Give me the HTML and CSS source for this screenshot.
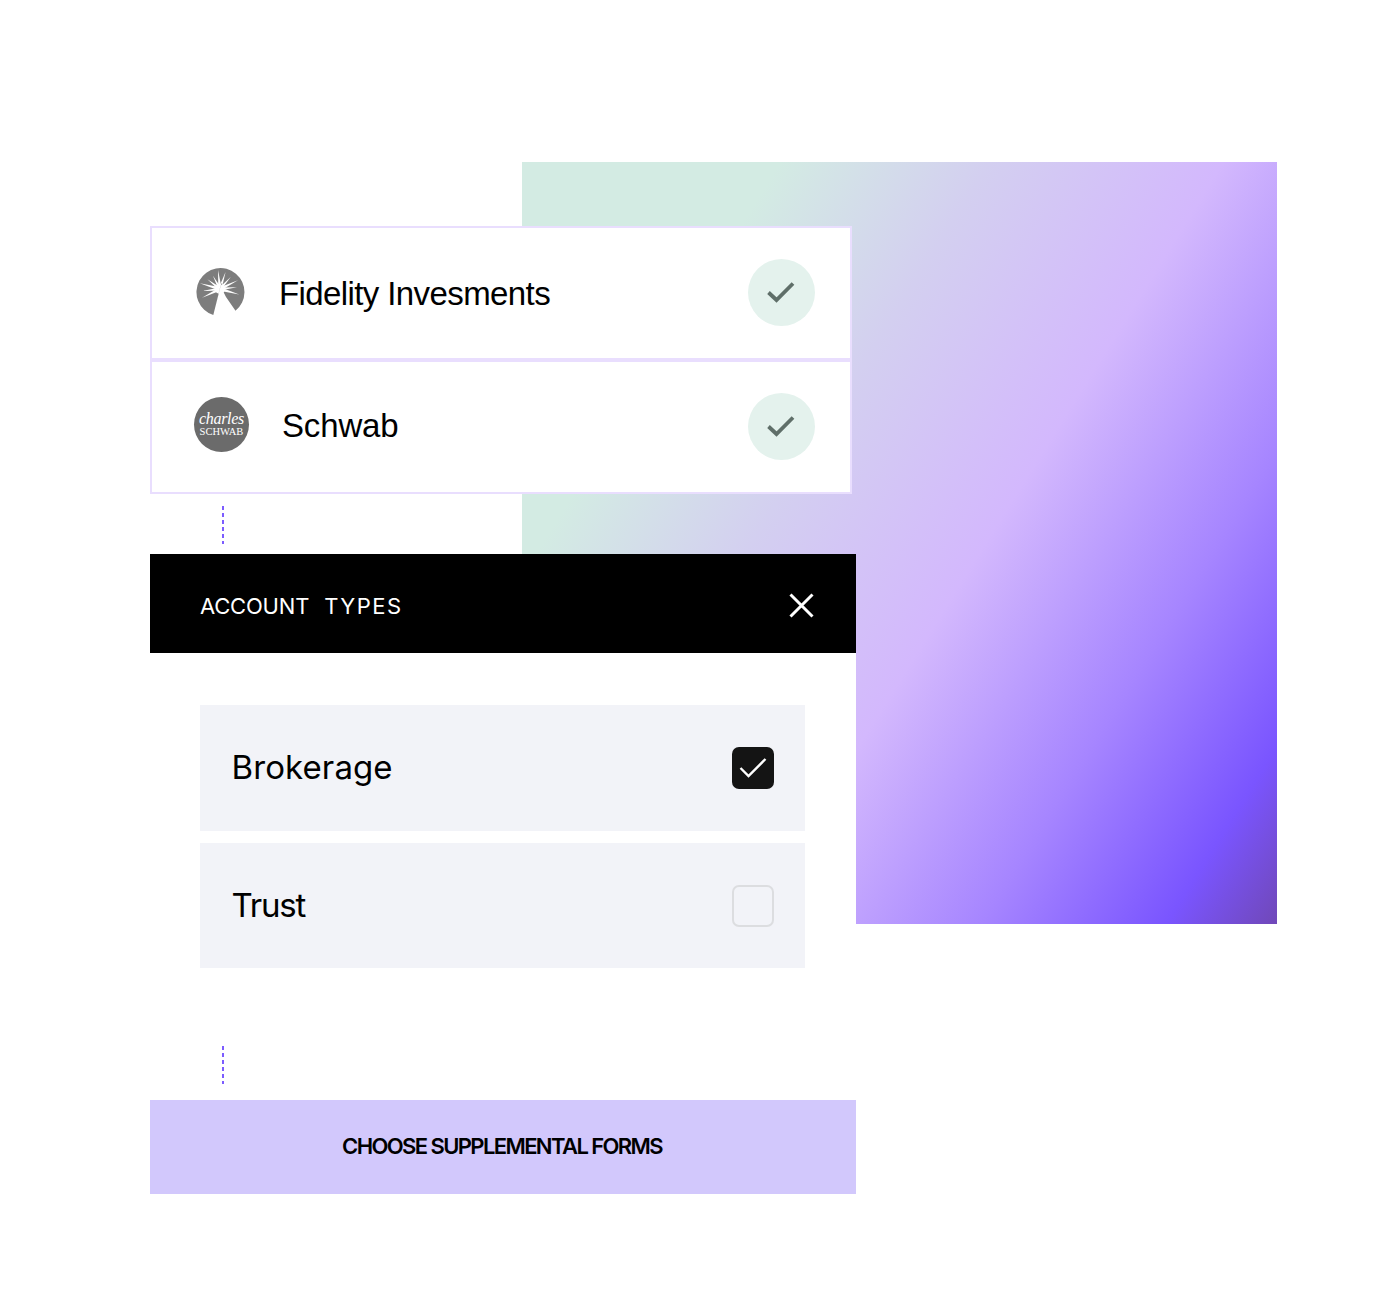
FILE: index.html
```html
<!DOCTYPE html>
<html lang="en">
<head>
<meta charset="utf-8">
<title>Account setup</title>
<link rel="stylesheet" href="styles.css">
</head>
<body>
<main class="stage">
  <div class="gradient"></div>
  <div class="column">
    <section class="card">
      <svg class="logo-fidelity" viewBox="0 0 50 48" width="50" height="48" aria-hidden="true">
        <path d="M17.300 47A24 24 0 1 1 39.500 42.800L30 29 24.500 18Z" fill="#7d7d7d"/>
        <g fill="#fff" transform="translate(24 21)">
          <path d="M-1.700 0 0-19 1.700 0Z" transform="rotate(-6)"/>
          <path d="M-1.600 0 0-15 1.600 0Z" transform="rotate(-28)"/>
          <path d="M-1.600 0 0-18 1.600 0Z" transform="rotate(18)"/>
          <path d="M-1.600 0 0-16 1.600 0Z" transform="rotate(42)"/>
          <path d="M-1.700 0 0-20 1.700 0Z" transform="rotate(64)"/>
          <path d="M-1.600 0 0-17 1.600 0Z" transform="rotate(84)"/>
          <path d="M-1.700 0 0-20 1.700 0Z" transform="rotate(106)"/>
          <path d="M-1.600 0 0-16 1.600 0Z" transform="rotate(-52)"/>
          <path d="M-1.700 0 0-21 1.700 0Z" transform="rotate(-74)"/>
          <path d="M-1.600 0 0-18 1.600 0Z" transform="rotate(-96)"/>
          <path d="M-1.700 0 0-20 1.700 0Z" transform="rotate(-116)"/>
          <circle r="5"/>
        </g>
        <path d="M25.300 15.500 18 44 24.500 18 26.500 15.500Z" fill="#7d7d7d"/>
      </svg>
      <span class="card-name fidelity">Fidelity Invesments</span>
      <span class="status">
        <svg viewBox="0 0 28 22" width="28" height="22" aria-hidden="true"><path d="M1.500 11.500 9.500 19 26 2.500" fill="none" stroke="#5f6f69" stroke-width="3.800"/></svg>
      </span>
    </section>
    <section class="card card-second">
      <span class="logo-schwab"><span class="charles">charles</span><span class="schwab">SCHWAB</span></span>
      <span class="card-name schwab-name">Schwab</span>
      <span class="status">
        <svg viewBox="0 0 28 22" width="28" height="22" aria-hidden="true"><path d="M1.500 11.500 9.500 19 26 2.500" fill="none" stroke="#5f6f69" stroke-width="3.800"/></svg>
      </span>
    </section>
    <div class="connector connector-top"></div>
    <section class="panel">
      <header class="panel-head">
        <h2 class="panel-title"><span class="word-first">ACCOUNT</span> <span class="word-second">TYPES</span></h2>
        <svg viewBox="0 0 25 25" width="25" height="25" aria-hidden="true"><path d="M1.500 1.500 23.500 23.500M23.500 1.500 1.500 23.500" fill="none" stroke="#fff" stroke-width="3"/></svg>
      </header>
      <div class="options">
        <div class="option">
          <span class="option-name brokerage">Brokerage</span>
          <span class="box box-on">
            <svg viewBox="0 0 28 22" width="28" height="22" aria-hidden="true"><path d="M1.500 11 9.500 19 26.500 2" fill="none" stroke="#fff" stroke-width="2.400"/></svg>
          </span>
        </div>
        <div class="option option-short">
          <span class="option-name trust">Trust</span>
          <span class="box box-off"></span>
        </div>
      </div>
    </section>
    <div class="connector connector-bottom"></div>
    <button class="cta" type="button">CHOOSE SUPPLEMENTAL FORMS</button>
  </div>
</main>
</body>
</html>
```
FILE: styles.css
```css
* { box-sizing: border-box; }
html, body { margin: 0; background: #fff; }
.stage {
  position: relative;
  width: 1374px;
  height: 1296px;
  padding: 226px 0 0 150px;
  overflow: hidden;
  font-family: Inter, "Liberation Sans", sans-serif;
  color: #000;
}
.gradient {
  position: absolute;
  left: 522px;
  top: 162px;
  width: 755px;
  height: 762px;
  background: linear-gradient(122deg, #d3ebe3 0%, #d3ebe3 21%, #d3cff0 38%, #d3b8fd 57%, #a685ff 76%, #7a55ff 91%, #7048b8 100%);
}
.column {
  position: relative;
  width: 706px;
  display: flex;
  flex-direction: column;
}
.card {
  width: 702px;
  height: 134px;
  display: flex;
  align-items: center;
  background: #fff;
  border: 2px solid #e9defe;
  padding-right: 35.500px;
}
.card-name {
  font-family: "Liberation Sans", Arial, sans-serif;
  font-size: 33px;
  letter-spacing: -0.6px;
  line-height: 40px;
  flex: 1;
}
.logo-fidelity { margin-left: 44px; margin-top: -2px; }
.fidelity { margin-left: 33px; margin-top: 1px; }
.logo-schwab {
  width: 55px;
  height: 55px;
  margin-left: 42px;
  margin-top: -5px;
  border-radius: 50%;
  background: #6b6b6b;
  color: #fff;
  display: flex;
  flex-direction: column;
  align-items: center;
  justify-content: center;
  font-family: "Liberation Serif", serif;
}
.charles { font-style: italic; font-size: 16px; line-height: 13px; letter-spacing: -0.3px; margin-top: -1px; }
.schwab { font-size: 10.500px; line-height: 10px; margin-top: 2px; }
.schwab-name { margin-left: 33px; margin-top: -3px; letter-spacing: -0.15px; }
.status {
  width: 67px;
  height: 67px;
  margin-top: -2px;
  border-radius: 50%;
  background: #e4f2ed;
  display: flex;
  align-items: center;
  justify-content: center;
}
.connector {
  width: 2px;
  height: 38px;
  margin-left: 72px;
  background: repeating-linear-gradient(to bottom, #7c5cff 0 4px, transparent 4px 7px);
}
.connector-top { margin-top: 12px; margin-bottom: 10px; }
.connector-bottom { margin-top: 78px; margin-bottom: 16px; }
.panel { width: 706px; background: #fff; }
.panel-head {
  height: 99px;
  background: #000;
  display: flex;
  align-items: center;
  justify-content: space-between;
  padding: 4px 42px 0 50px;
}
.panel-title {
  margin: 0;
  display: flex;
  gap: 15px;
  color: #fff;
  font-size: 22px;
  font-weight: 400;
}
.word-first { letter-spacing: -0.2px; }
.word-second { letter-spacing: 1.500px; }
.options {
  padding: 52px 51px 0 50px;
  display: flex;
  flex-direction: column;
  gap: 12px;
}
.option {
  height: 126px;
  background: #f2f3f8;
  display: flex;
  align-items: center;
  justify-content: space-between;
  padding: 0 31px 0 31.500px;
}
.option-short { height: 125px; }
.option-name { font-size: 33px; line-height: 40px; margin-top: -2px; }
.brokerage { letter-spacing: 0.100px; }
.trust { letter-spacing: -1.200px; }
.box {
  width: 42px;
  height: 42px;
  border-radius: 7px;
  display: flex;
  align-items: center;
  justify-content: center;
}
.box-on { background: #141414; }
.box-off { border: 2px solid #dcdde0; }
.cta {
  display: block;
  width: 706px;
  height: 94px;
  border: 0;
  padding: 0 2px 2px 0;
  background: #d2c8fc;
  color: #000;
  font-family: Inter, "Liberation Sans", sans-serif;
  font-size: 22px;
  font-weight: 600;
  letter-spacing: -1.600px;
}
```
